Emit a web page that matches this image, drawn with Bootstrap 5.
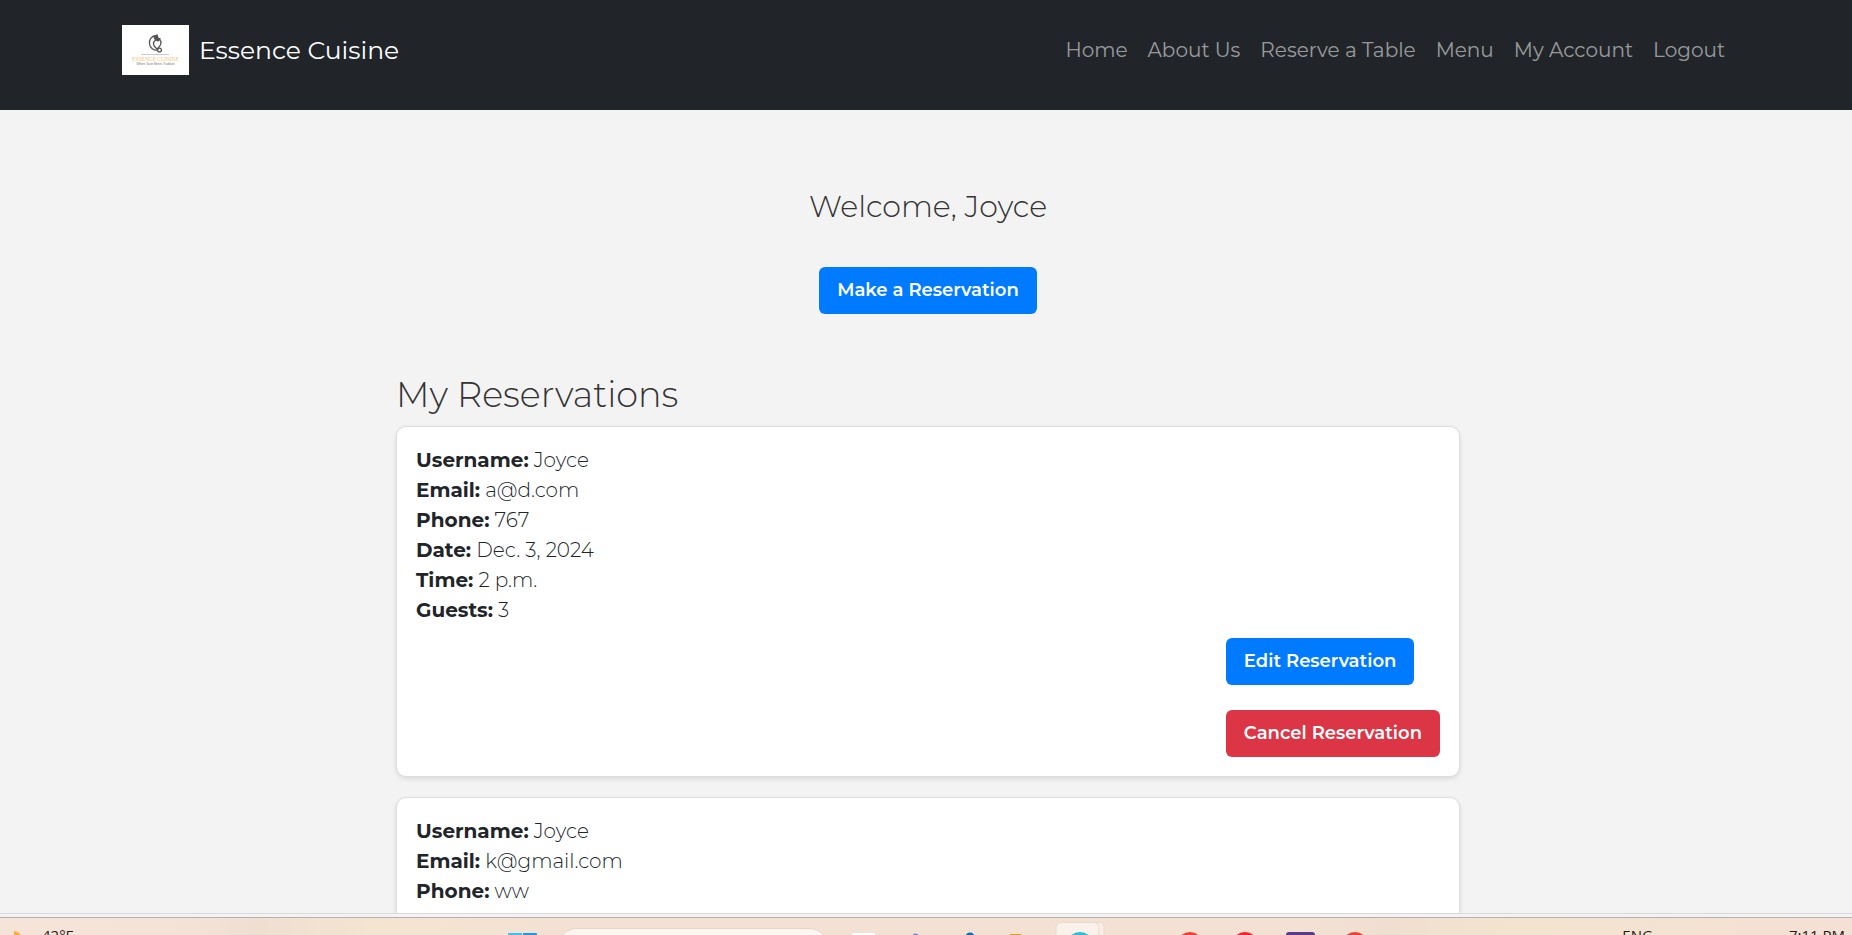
<!DOCTYPE html>
<html lang="en">
<head>
<meta charset="utf-8">
<meta name="viewport" content="width=device-width, initial-scale=1">
<title>Essence Cuisine - My Account</title>
<link rel="stylesheet" href="https://cdn.jsdelivr.net/npm/bootstrap@5.3.0/dist/css/bootstrap.min.css">
<style>
  body { font-family: Montserrat, Inter, sans-serif; font-size: 20px; line-height: 30px; font-weight: 300; color: #212529; background: #f3f3f3; }
  .site-nav { min-height: 110px; padding: 20px 0 30px; }
  .site-nav .container-fluid { padding: 0 117px 0 122px; }
  .site-nav .navbar-brand { font-size: 25px; line-height: 38px; font-weight: 400; padding: 5px 0; margin: 0; gap: 10px; }
  .site-nav .navbar-nav .nav-link { font-size: 20px; font-weight: 400; color: rgba(255, 255, 255, .55); padding: 10px; }
  .page-view { min-height: 0; overflow: hidden; }
  .account { padding: 77px 0 0 4px; }
  .account-inner { width: 58%; max-width: 1064px; margin: 0 auto; }
  .welcome { font-size: 30px; line-height: 40px; font-weight: 300; color: #333; margin-bottom: 40px; }
  .heading { font-size: 35px; line-height: 42px; font-weight: 300; color: #333; margin: 60px 0 10px; }
  .btn-res { font-size: 18px; line-height: 27px; font-weight: 600; color: #fff; padding: 10px 18px; border: 0; border-radius: 6px; }
  .btn-blue, .btn-blue:hover { background: #007bff; color: #fff; }
  .btn-red, .btn-red:hover { background: #dc3545; color: #fff; }
  .res-card { background: #fff; border: 1px solid #ddd; border-radius: 10px; padding: 18px 19px 19px; margin-bottom: 20px; box-shadow: 0 2px 5px rgba(0, 0, 0, .1); }
  .res-card p { margin-bottom: 13px; }
  .res-card strong { font-weight: 700; }
  .res-actions { gap: 25px; }
  .window-edge { height: 5px; background: #f3f3f3; border-top: 1px solid #dadada; border-bottom: 1px solid #b5b0ad; }
  .taskbar { height: 17px; overflow: hidden; background: linear-gradient(90deg, #f7e4d8 0, #f6e3d7 9%, #eedfd2 14%, #f4e5d1 20%, #f3e2d3 30%, #f3e2d3 70%, #efdfd0 75%, #f3e4cf 82%, #f5e0d5 100%); font-family: "Open Sans", sans-serif; font-size: 15px; line-height: 20px; font-weight: 400; color: #1f1b19; }
  .taskbar .side { padding-top: 7px; flex: 1 1 0; }
  .taskbar .apps { padding-left: 51px; }
  .taskbar .tray { padding-right: 7px; gap: 136px; }
  .task-search { width: 272px; height: 40px; margin: 10px 20px 0; border: 1px solid #e8d5c8; border-radius: 20px; background: #fcf6f1; }
</style>
</head>
<body class="vh-100 overflow-hidden d-flex flex-column">
<div class="page-view flex-fill">
  <nav class="navbar navbar-expand-lg navbar-dark bg-dark site-nav">
    <div class="container-fluid">
      <a class="navbar-brand d-flex align-items-center" href="#">
        <svg width="67" height="50" viewBox="0 0 67 50" role="img" aria-label="Essence Cuisine logo">
          <rect width="67" height="50" fill="#fff"/>
          <g fill="none" stroke="#555" stroke-width="1.3">
            <path d="M34 10.500C29 11 27 15 27.500 19c.5 4 4 6.500 8 6"/>
            <path d="M34 15c-4 2-3 6 1 9 4-3 5-7 3-9-1-1-3-1-4 0z"/>
            <circle cx="37.500" cy="25" r="1.900"/>
            <path d="M32 12l3-2 1 3 2 1-2 2-3-2z" fill="#555"/>
          </g>
          <path d="M19 29.500h28" stroke="#ccc"/>
          <text x="33.500" y="36" text-anchor="middle" font-family="Liberation Serif, serif" font-size="5.500" fill="#f6c078">ESSENCE CUISINE</text>
          <text x="33.500" y="40" text-anchor="middle" font-family="Liberation Sans, sans-serif" font-size="3" fill="#777">Where Taste Meets Tradition</text>
        </svg>
        <span>Essence Cuisine</span>
      </a>
      <ul class="navbar-nav flex-row">
        <li class="nav-item"><a class="nav-link" href="#">Home</a></li>
        <li class="nav-item"><a class="nav-link" href="#">About Us</a></li>
        <li class="nav-item"><a class="nav-link" href="#">Reserve a Table</a></li>
        <li class="nav-item"><a class="nav-link" href="#">Menu</a></li>
        <li class="nav-item"><a class="nav-link" href="#">My Account</a></li>
        <li class="nav-item"><a class="nav-link" href="#">Logout</a></li>
      </ul>
    </div>
  </nav>
  <main class="account">
    <div class="account-inner">
      <div class="text-center">
        <h1 class="welcome">Welcome, Joyce</h1>
        <button type="button" class="btn btn-res btn-blue">Make a Reservation</button>
      </div>
      <h2 class="heading">My Reservations</h2>
      <article class="res-card">
        <p><strong>Username:</strong> Joyce<br><strong>Email:</strong> a@d.com<br><strong>Phone:</strong> 767<br><strong>Date:</strong> Dec. 3, 2024<br><strong>Time:</strong> 2 p.m.<br><strong>Guests:</strong> 3</p>
        <div class="d-flex justify-content-end">
          <div class="res-actions d-flex flex-column align-items-start">
            <button type="button" class="btn btn-res btn-blue">Edit Reservation</button>
            <button type="button" class="btn btn-res btn-red">Cancel Reservation</button>
          </div>
        </div>
      </article>
      <article class="res-card">
        <p><strong>Username:</strong> Joyce<br><strong>Email:</strong> k@gmail.com<br><strong>Phone:</strong> ww</p>
      </article>
    </div>
  </main>
</div>
<div class="window-edge flex-shrink-0"></div>
<footer class="taskbar flex-shrink-0 d-flex align-items-start">
  <div class="side d-flex">
    <svg width="42" height="20" viewBox="0 0 42 20" aria-hidden="true"><path d="M14 6a9 9 0 0 1 6 15H14z" fill="#fbb03b"/></svg>
    <span>42°F</span>
  </div>
  <div class="apps d-flex align-items-start">
    <svg width="29" height="17" viewBox="0 0 29 17" aria-hidden="true"><path d="M0 17v-1q0-1 1-1h13v2z" fill="#3fc0f5"/><path d="M15 17v-2h13q1 0 1 1v1z" fill="#2196e3"/></svg>
    <input class="task-search" type="text" aria-label="Search">
    <svg width="540" height="17" viewBox="848 918 540 17" aria-hidden="true">
      <rect x="851" y="933" width="23" height="10" rx="2" fill="#fff"/>
      <circle cx="914.500" cy="937" r="3.500" fill="#7b7fe8"/>
      <circle cx="969" cy="937" r="4.500" fill="#0f6cbd"/>
      <rect x="1009" y="934" width="11" height="5" fill="#e0a010"/>
      <rect x="1060" y="922.500" width="43" height="30" rx="5" fill="#faeee6" stroke="#ead9cd"/>
      <rect x="1055" y="922.500" width="43" height="30" rx="5" fill="#fbf1eb" stroke="#ead9cd"/>
      <circle cx="1079" cy="946" r="14" fill="#2fbfd5"/>
      <circle cx="1189" cy="945" r="13" fill="#ea4335"/>
      <circle cx="1244" cy="945" r="13" fill="#fa1e32"/>
      <rect x="1285" y="932" width="29" height="12" rx="3" fill="#5b3a86"/>
      <circle cx="1354" cy="945" r="13" fill="#ea4335"/>
    </svg>
  </div>
  <div class="side tray d-flex justify-content-end"><span>ENG</span><span>7:11 PM</span></div>
</footer>
<script src="https://cdn.jsdelivr.net/npm/bootstrap@5.3.0/dist/js/bootstrap.bundle.min.js"></script>
</body>
</html>
